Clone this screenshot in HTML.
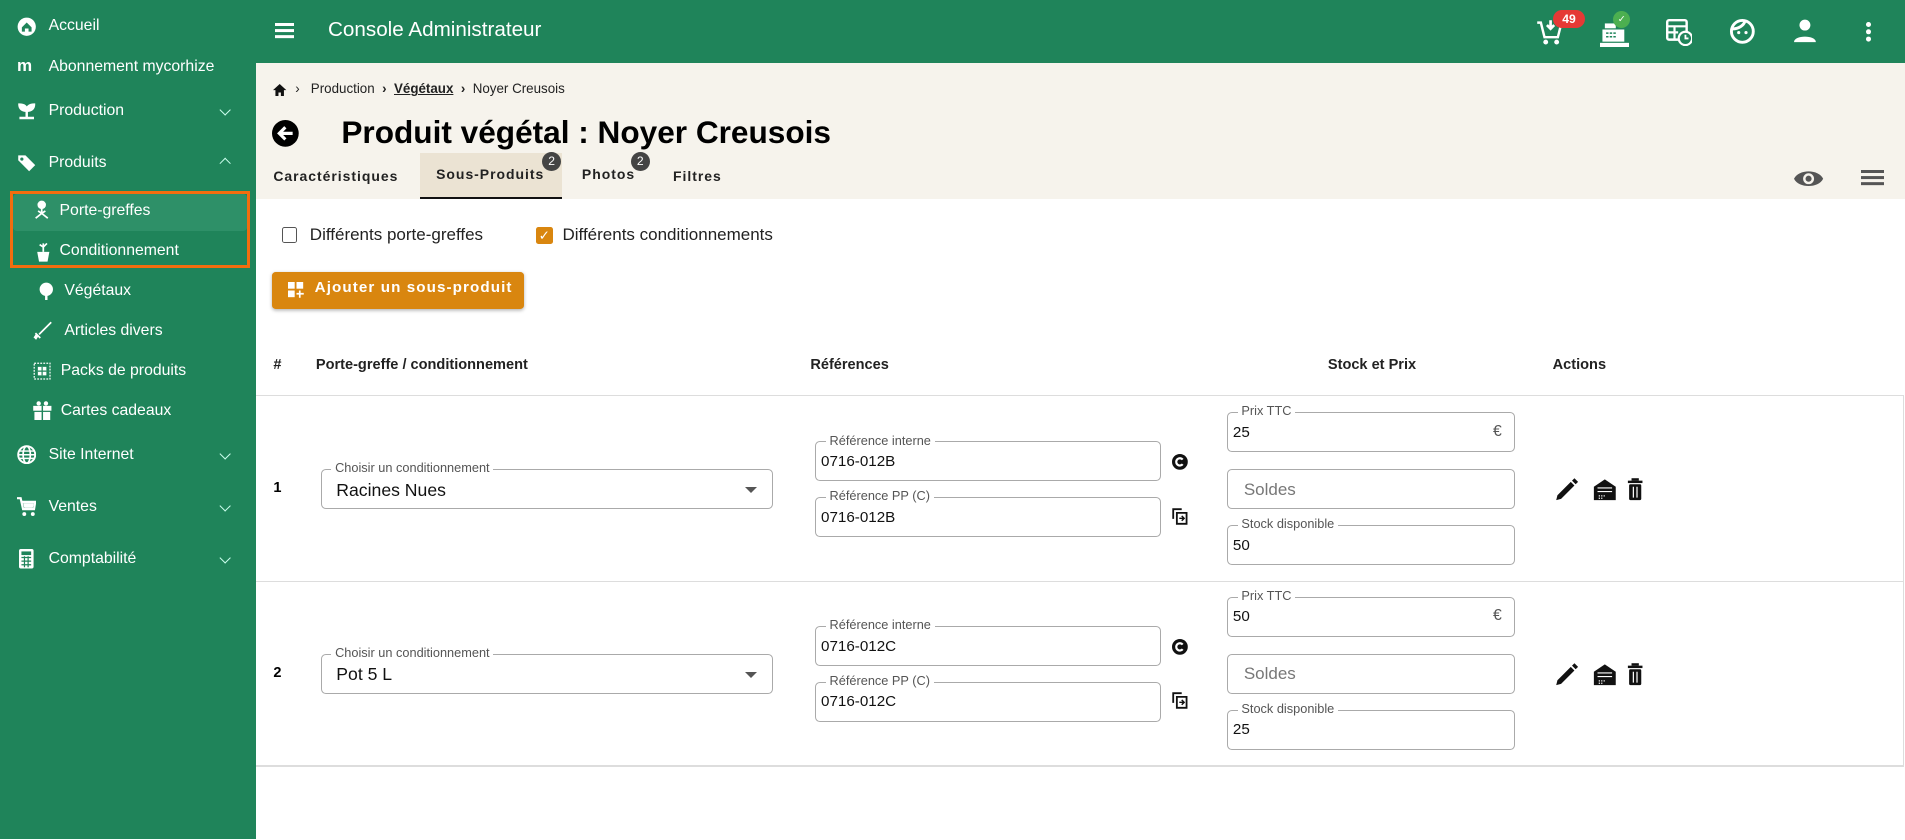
<!DOCTYPE html>
<html><head><meta charset="utf-8"><style>
html{zoom:1.2149}
body{margin:0;width:1568px;height:691px;overflow:hidden;font-family:"Liberation Sans",sans-serif;background:#fff;position:relative}
.a{position:absolute}
#side{left:0;top:0;width:211px;height:691px;background:#1f845a;color:#fff}
.si{position:absolute;font-size:13px;color:#fff;white-space:nowrap}
.chev{position:absolute;left:182px;width:6px;height:6px;border-right:1.5px solid #cfe;border-bottom:1.5px solid #cfe;transform:rotate(45deg)}
.ic{position:absolute;background:#fff}
#top{left:211px;top:0;width:1357px;height:52px;background:#1f845a}
#beige{left:211px;top:52px;width:1357px;height:112px;background:#f6f3ec}
.lbl{position:absolute;font-size:10.5px;color:#555;background:#fff;padding:0 3px;top:-7px;left:8px;line-height:12px}
.box{position:absolute;border:1px solid #aaa;border-radius:4px;background:#fff;box-sizing:border-box}
.val{position:absolute;left:4px;font-size:12.5px;color:#111}
.th{position:absolute;top:294px;font-size:12px;font-weight:bold;color:#222}
.hr{position:absolute;left:211px;width:1356px;height:1px;background:#ddd}
</style></head><body>
<div id="side" class="a">
 <svg class="a" style="left:14px;top:14px" width="16" height="16" viewBox="0 0 16 16"><circle cx="8" cy="8" r="7.5" fill="#fff"/><path d="M4 8.5L8 4.5L12 8.5V12H9.5V9.5H6.5V12H4Z" fill="#1f845a"/></svg>
 <div class="si" style="left:40px;top:14px">Accueil</div>
 <div class="si" style="left:14px;top:46px;font-weight:bold;font-size:14px">m</div>
 <div class="si" style="left:40px;top:48px">Abonnement mycorhize</div>
 <svg class="a" style="left:14px;top:83px" width="16" height="16" viewBox="0 0 16 16"><path d="M8 14V8M8 8C8 4 5 3 2 3C2 6 4 8 8 8ZM8 8C8 5 10 3 14 3C14 6 12 8 8 8ZM2 14H14" stroke="#fff" stroke-width="2" fill="#fff"/></svg>
 <div class="si" style="left:40px;top:84px">Production</div><div class="chev" style="top:87px"></div>
 <svg class="a" style="left:14px;top:126px" width="17" height="16" viewBox="0 0 17 16"><path d="M1 2H7L15 10L10 15L1 6Z" fill="#fff"/><circle cx="4" cy="5" r="1.3" fill="#1f845a"/></svg>
 <div class="si" style="left:40px;top:127px">Produits</div><div class="chev" style="top:131px;transform:rotate(225deg)"></div>
 <div class="a" style="left:8px;top:157px;width:198px;height:64px;border:2.5px solid #f26d0e;box-sizing:border-box"></div>
 <div class="a" style="left:11px;top:160px;width:192px;height:30px;background:#2e9068;border-radius:3px"></div>
 <svg class="a" style="left:26px;top:165px" width="16" height="16" viewBox="0 0 16 16"><circle cx="8" cy="4" r="3.5" fill="#fff"/><path d="M8 7V11M8 11L3 15M8 11L13 15M8 11L5 9M8 11L11 9" stroke="#fff" stroke-width="1.4" fill="none"/></svg>
 <div class="si" style="left:49px;top:166px">Porte-greffes</div>
 <svg class="a" style="left:30px;top:198px" width="12" height="18" viewBox="0 0 12 18"><path d="M6 9V2M6 5L9 2M6 5L3 3" stroke="#fff" stroke-width="1.4" fill="none"/><path d="M1 9H11L9.5 17H2.5Z" fill="#fff"/></svg>
 <div class="si" style="left:49px;top:199px">Conditionnement</div>
 <svg class="a" style="left:32px;top:232px" width="12" height="15" viewBox="0 0 12 15"><circle cx="6" cy="6" r="5.5" fill="#fff"/><rect x="5" y="9" width="2" height="6" fill="#fff"/></svg>
 <div class="si" style="left:53px;top:232px">Végétaux</div>
 <svg class="a" style="left:27px;top:264px" width="16" height="16" viewBox="0 0 16 16"><path d="M15 1L5 11M2 10L6 14M3 11L1 14M4 12L2 15" stroke="#fff" stroke-width="1.4"/></svg>
 <div class="si" style="left:53px;top:265px">Articles divers</div>
 <svg class="a" style="left:27px;top:298px" width="15" height="15" viewBox="0 0 15 15"><rect x="1" y="1" width="13" height="13" fill="none" stroke="#fff" stroke-dasharray="1.5 1"/><rect x="4" y="4" width="7" height="7" fill="#fff"/><path d="M7.5 4V11M4 7.5H11" stroke="#1f845a"/></svg>
 <div class="si" style="left:50px;top:298px">Packs de produits</div>
 <svg class="a" style="left:26px;top:330px" width="17" height="16" viewBox="0 0 17 16"><rect x="1" y="4" width="15" height="4" fill="#fff"/><rect x="2" y="9" width="13" height="7" fill="#fff"/><path d="M8.5 4V16" stroke="#1f845a" stroke-width="1.2"/><circle cx="5.5" cy="2" r="1.8" fill="#fff"/><circle cx="11.5" cy="2" r="1.8" fill="#fff"/></svg>
 <div class="si" style="left:50px;top:331px">Cartes cadeaux</div>
 <svg class="a" style="left:14px;top:366px" width="16" height="16" viewBox="0 0 16 16"><circle cx="8" cy="8" r="7" fill="none" stroke="#fff" stroke-width="1.6"/><ellipse cx="8" cy="8" rx="3" ry="7" fill="none" stroke="#fff" stroke-width="1.4"/><path d="M1 8H15M2 5H14M2 11H14" stroke="#fff" stroke-width="1.2"/></svg>
 <div class="si" style="left:40px;top:367px">Site Internet</div><div class="chev" style="top:370px"></div>
 <svg class="a" style="left:14px;top:409px" width="16" height="16" viewBox="0 0 16 16"><path d="M0 1H3L5 10H14L15 4H4" stroke="#fff" stroke-width="1.8" fill="none"/><path d="M5 5H14L13 9H6Z" fill="#fff"/><circle cx="6" cy="14" r="1.6" fill="#fff"/><circle cx="13" cy="14" r="1.6" fill="#fff"/></svg>
 <div class="si" style="left:40px;top:410px">Ventes</div><div class="chev" style="top:413px"></div>
 <svg class="a" style="left:16px;top:452px" width="12" height="16" viewBox="0 0 12 16"><rect width="12" height="16" rx="1.5" fill="#fff"/><rect x="2" y="2" width="8" height="3" fill="#1f845a"/><path d="M2 7H10M2 10H10M2 13H10M4.5 6V15M7.5 6V15" stroke="#1f845a" stroke-width="1"/></svg>
 <div class="si" style="left:40px;top:453px">Comptabilité</div><div class="chev" style="top:456px"></div>
</div>
<div id="top" class="a">
 <div class="a" style="left:15px;top:19px;width:16px;height:2px;background:#fff;box-shadow:0 5px #fff,0 10px #fff"></div>
 <div class="a" style="left:59px;top:15px;font-size:17px;color:#fff">Console Administrateur</div>
 <svg class="a" style="left:1053px;top:16px" width="22" height="22" viewBox="0 0 22 22"><path d="M1 3H4L7 15H18L20 7" stroke="#fff" stroke-width="2" fill="none"/><path d="M12 1V7M9 5L12 8L15 5" stroke="#fff" stroke-width="2.2" fill="none"/><circle cx="8" cy="19" r="2" fill="#fff"/><circle cx="17" cy="19" r="2" fill="#fff"/></svg>
 <div class="a" style="left:1067px;top:8px;width:27px;height:15px;border-radius:8px;background:#e53935;color:#fff;font-size:10px;font-weight:bold;text-align:center;line-height:15px">49</div>
 <svg class="a" style="left:1106px;top:17px" width="24" height="22" viewBox="0 0 24 22"><rect x="4" y="2" width="9" height="4" fill="#fff"/><rect x="2" y="7" width="18" height="10" fill="#fff"/><path d="M5 10H13M5 13H13" stroke="#1f845a" stroke-width="1.2" stroke-dasharray="2 1"/><rect x="0" y="18" width="24" height="3.5" fill="#fff"/></svg>
 <div class="a" style="left:1117px;top:9px;width:14px;height:14px;border-radius:50%;background:#4caf50;color:#fff;font-size:8px;text-align:center;line-height:14px">✓</div>
 <svg class="a" style="left:1160px;top:16px" width="22" height="22" viewBox="0 0 22 22"><rect x="1" y="1" width="16" height="16" rx="1.5" fill="none" stroke="#fff" stroke-width="2"/><path d="M1 6H17M7 6V17M1 11H10" stroke="#fff" stroke-width="1.8"/><circle cx="16" cy="16" r="5.5" fill="#1f845a" stroke="#fff" stroke-width="1.8"/><path d="M16 13V16H18.5" stroke="#fff" stroke-width="1.5" fill="none"/></svg>
 <svg class="a" style="left:1212px;top:15px" width="22" height="22" viewBox="0 0 22 22"><circle cx="11" cy="11" r="9" fill="none" stroke="#fff" stroke-width="2.4"/><path d="M3 9C8 9 12 6 13 3" stroke="#fff" stroke-width="2.4" fill="none"/><circle cx="8" cy="12" r="1.3" fill="#fff"/><circle cx="14" cy="12" r="1.3" fill="#fff"/></svg>
 <svg class="a" style="left:1266px;top:16px" width="18" height="20" viewBox="0 0 18 20"><circle cx="9" cy="5" r="4.5" fill="#fff"/><path d="M0 19C0 13 18 13 18 19Z" fill="#fff"/></svg>
 <div class="a" style="left:1325px;top:18px;width:4px;height:4px;border-radius:50%;background:#fff;box-shadow:0 6px #fff,0 12px #fff"></div>
</div>
<div id="beige" class="a">
 <svg class="a" style="left:14px;top:17px" width="11" height="10" viewBox="0 0 11 10"><path d="M5.5 0L11 5H9V10H6.5V7H4.5V10H2V5H0Z" fill="#111"/></svg>
 <div class="a" style="top:15px;left:32px;font-size:11px;color:#222;white-space:nowrap">›&nbsp;&nbsp; Production &nbsp;<b>›</b>&nbsp; <b style="text-decoration:underline">Végétaux</b> &nbsp;<b>›</b>&nbsp; Noyer Creusois</div>
 <svg class="a" style="left:13px;top:47px" width="22" height="22" viewBox="0 0 22 22"><circle cx="11" cy="11" r="11" fill="#000"/><path d="M17 11H7M11 6L6 11L11 16" stroke="#fff" stroke-width="2.6" fill="none"/></svg>
 <div class="a" style="left:70px;top:42px;font-size:26px;font-weight:bold;color:#000;white-space:nowrap">Produit végétal : Noyer Creusois</div>
 <div class="a" style="left:135px;top:74px;width:117px;height:36px;background:#ebe3d3;border-bottom:2px solid #111"></div>
 <div class="a" style="left:14px;top:86px;font-size:11.5px;font-weight:bold;letter-spacing:0.8px;color:#222">Caractéristiques</div>
 <div class="a" style="left:148px;top:85px;font-size:11.5px;font-weight:bold;letter-spacing:0.8px;color:#222">Sous-Produits</div>
 <div class="a" style="left:235px;top:73px;width:16px;height:16px;border-radius:50%;background:#444;color:#fff;font-size:10px;text-align:center;line-height:16px">2</div>
 <div class="a" style="left:268px;top:85px;font-size:11.5px;font-weight:bold;letter-spacing:0.8px;color:#222">Photos</div>
 <div class="a" style="left:308px;top:73px;width:16px;height:16px;border-radius:50%;background:#444;color:#fff;font-size:10px;text-align:center;line-height:16px">2</div>
 <div class="a" style="left:343px;top:86px;font-size:11.5px;font-weight:bold;letter-spacing:0.8px;color:#222">Filtres</div>
 <svg class="a" style="left:1266px;top:87px" width="24" height="16" viewBox="0 0 24 16"><path d="M0 8C4 0 20 0 24 8C20 16 4 16 0 8Z" fill="#555"/><circle cx="12" cy="8" r="4.5" fill="#f6f3ec"/><circle cx="12" cy="8" r="2.5" fill="#555"/></svg>
 <div class="a" style="left:1321px;top:88px;width:19px;height:2px;background:#555;box-shadow:0 5px #555,0 10px #555"></div>
</div>
<div class="a" style="left:232px;top:187px;width:11px;height:11px;border:1.5px solid #555;border-radius:2px"></div>
<div class="a" style="left:255px;top:185px;font-size:14px;color:#222">Différents porte-greffes</div>
<div class="a" style="left:441px;top:187px;width:14px;height:14px;background:#d9860f;border-radius:2px;color:#fff;font-size:11px;text-align:center;line-height:14px">✓</div>
<div class="a" style="left:463px;top:185px;font-size:14px;color:#222">Différents conditionnements</div>
<div class="a" style="left:224px;top:224px;width:207px;height:30px;background:#d9860f;border-radius:3px;box-shadow:0 1px 3px rgba(0,0,0,.3)"></div>
<svg class="a" style="left:237px;top:232px" width="13" height="13" viewBox="0 0 13 13"><rect width="5.5" height="5.5" fill="#fff"/><rect x="7" width="5.5" height="5.5" fill="#fff"/><rect y="7" width="5.5" height="5.5" fill="#fff"/><path d="M9.7 7V13M7 9.7H13" stroke="#fff" stroke-width="1.4"/></svg>
<div class="a" style="left:259px;top:230px;font-size:12.5px;font-weight:bold;color:#fff;letter-spacing:0.9px">Ajouter un sous-produit</div>
<div class="th" style="left:225px">#</div>
<div class="th" style="left:260px">Porte-greffe / conditionnement</div>
<div class="th" style="left:667px">Références</div>
<div class="th" style="left:1093px">Stock et Prix</div>
<div class="th" style="left:1278px">Actions</div>
<div class="hr" style="top:325px"></div><div class="hr" style="top:478px"></div><div class="hr" style="top:630px"></div>
<div class="a" style="left:1566px;top:325px;width:1px;height:306px;background:#ddd"></div>

<div id="rows"></div>
<!-- row 1 -->
<div class="a" style="left:225px;top:395px;font-size:12px;font-weight:bold">1</div>
<div class="box" style="left:264px;top:386px;width:372px;height:33px"><span class="lbl">Choisir un conditionnement</span><span class="val" style="left:12px;top:8px;font-size:14.5px">Racines Nues</span><span class="a" style="left:348px;top:14px;border:5px solid transparent;border-top-color:#555"></span></div>
<div class="box" style="left:671px;top:363px;width:285px;height:33px"><span class="lbl">Référence interne</span><span class="val" style="top:9px">0716-012B</span></div>
<div class="box" style="left:671px;top:409px;width:285px;height:33px"><span class="lbl">Référence PP (C)</span><span class="val" style="top:9px">0716-012B</span></div>
<svg class="a" style="left:965px;top:374px" width="13" height="13" viewBox="0 0 13 13"><circle cx="6.5" cy="6.5" r="6.5" fill="#111"/><path d="M8.8 4.6A3 3 0 1 0 8.8 8.4" stroke="#fff" stroke-width="1.8" fill="none"/></svg>
<svg class="a" style="left:965px;top:418px" width="13" height="14" viewBox="0 0 13 14"><path d="M1 9V1H8M4 4H12V13H4Z" stroke="#111" stroke-width="1.5" fill="none"/><path d="M6 8.5H10M8 6.5L10 8.5L8 10.5" stroke="#111" stroke-width="1.2" fill="none"/></svg>
<div class="box" style="left:1010px;top:339px;width:237px;height:33px"><span class="lbl">Prix TTC</span><span class="val" style="top:9px">25</span><span class="a" style="right:10px;top:8px;font-size:13px;color:#555">€</span></div>
<div class="box" style="left:1010px;top:386px;width:237px;height:33px"><span class="val" style="left:13px;top:8px;font-size:14px;color:#777">Soldes</span></div>
<div class="box" style="left:1010px;top:432px;width:237px;height:33px"><span class="lbl">Stock disponible</span><span class="val" style="top:9px">50</span></div>
<svg class="a" style="left:1280px;top:393px" width="72" height="20" viewBox="0 0 72 20"><path d="M1 19L2 15L13 4L16 7L5 18Z M14 3L16 1L19 4L17 6Z" fill="#111"/><path d="M32 8L41 2L50 8V19H32Z" fill="#111"/><path d="M35 9H47M35 12H47" stroke="#fff" stroke-width="1"/><path d="M36 15h1v1h-1zM38 15h1v1h-1zM40 15h1v1h-1zM36 17h1v1h-1zM38 17h1v1h-1z" fill="#fff"/><rect x="63" y="1" width="6" height="2" fill="#111"/><rect x="60" y="3" width="12" height="2" fill="#111"/><rect x="61" y="6" width="10" height="13" rx="1" fill="#111"/><path d="M64.5 8V17M67.5 8V17" stroke="#fff" stroke-width="1"/></svg>
<!-- row 2 -->
<div class="a" style="left:225px;top:547px;font-size:12px;font-weight:bold">2</div>
<div class="box" style="left:264px;top:538px;width:372px;height:33px"><span class="lbl">Choisir un conditionnement</span><span class="val" style="left:12px;top:8px;font-size:14.5px">Pot 5 L</span><span class="a" style="left:348px;top:14px;border:5px solid transparent;border-top-color:#555"></span></div>
<div class="box" style="left:671px;top:515px;width:285px;height:33px"><span class="lbl">Référence interne</span><span class="val" style="top:9px">0716-012C</span></div>
<div class="box" style="left:671px;top:561px;width:285px;height:33px"><span class="lbl">Référence PP (C)</span><span class="val" style="top:9px">0716-012C</span></div>
<svg class="a" style="left:965px;top:526px" width="13" height="13" viewBox="0 0 13 13"><circle cx="6.5" cy="6.5" r="6.5" fill="#111"/><path d="M8.8 4.6A3 3 0 1 0 8.8 8.4" stroke="#fff" stroke-width="1.8" fill="none"/></svg>
<svg class="a" style="left:965px;top:570px" width="13" height="14" viewBox="0 0 13 14"><path d="M1 9V1H8M4 4H12V13H4Z" stroke="#111" stroke-width="1.5" fill="none"/><path d="M6 8.5H10M8 6.5L10 8.5L8 10.5" stroke="#111" stroke-width="1.2" fill="none"/></svg>
<div class="box" style="left:1010px;top:491px;width:237px;height:33px"><span class="lbl">Prix TTC</span><span class="val" style="top:9px">50</span><span class="a" style="right:10px;top:8px;font-size:13px;color:#555">€</span></div>
<div class="box" style="left:1010px;top:538px;width:237px;height:33px"><span class="val" style="left:13px;top:8px;font-size:14px;color:#777">Soldes</span></div>
<div class="box" style="left:1010px;top:584px;width:237px;height:33px"><span class="lbl">Stock disponible</span><span class="val" style="top:9px">25</span></div>
<svg class="a" style="left:1280px;top:545px" width="72" height="20" viewBox="0 0 72 20"><path d="M1 19L2 15L13 4L16 7L5 18Z M14 3L16 1L19 4L17 6Z" fill="#111"/><path d="M32 8L41 2L50 8V19H32Z" fill="#111"/><path d="M35 9H47M35 12H47" stroke="#fff" stroke-width="1"/><path d="M36 15h1v1h-1zM38 15h1v1h-1zM40 15h1v1h-1zM36 17h1v1h-1zM38 17h1v1h-1z" fill="#fff"/><rect x="63" y="1" width="6" height="2" fill="#111"/><rect x="60" y="3" width="12" height="2" fill="#111"/><rect x="61" y="6" width="10" height="13" rx="1" fill="#111"/><path d="M64.5 8V17M67.5 8V17" stroke="#fff" stroke-width="1"/></svg>
</body></html>
